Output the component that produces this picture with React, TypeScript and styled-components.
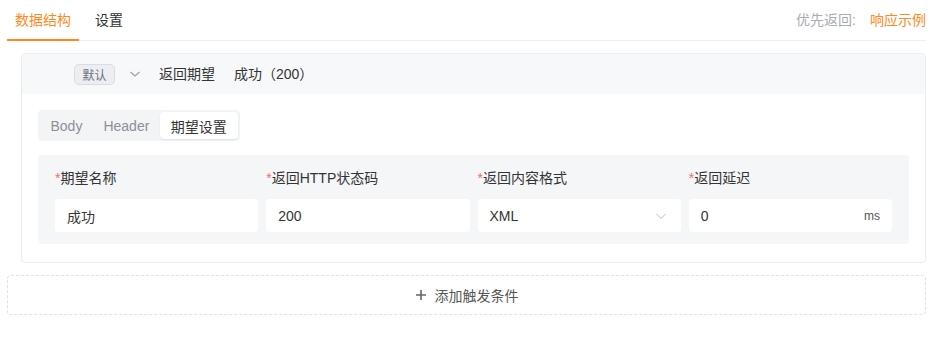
import React from "react";
import styled, { createGlobalStyle } from "styled-components";

const GlobalStyle = createGlobalStyle`
  html, body {
    margin: 0;
    padding: 0;
    background: #ffffff;
  }
  body {
    font-family: "Liberation Sans", "Noto Sans CJK SC", sans-serif;
    color: #333333;
  }
`;

const ORANGE = "#ff8a1c";

const Page = styled.div`
  width: 919px;
  padding-left: 7px;
`;

const TabBar = styled.div`
  display: flex;
  align-items: stretch;
  height: 40px;
  border-bottom: 1px solid #eeeff2;
`;

const Tab = styled.div<{ $active?: boolean }>`
  display: flex;
  align-items: center;
  padding: 0 8px;
  margin-right: 8px;
  font-size: 14px;
  line-height: 20px;
  color: ${(p) => (p.$active ? ORANGE : "#333333")};
  border-bottom: 2px solid ${(p) => (p.$active ? ORANGE : "transparent")};
  margin-bottom: -1px;
`;

const Priority = styled.div`
  margin-left: auto;
  display: flex;
  align-items: center;
  gap: 14px;
  font-size: 14px;
  line-height: 20px;
  color: #a8abb2;
`;

const PriorityLink = styled.span`
  color: ${ORANGE};
`;

const Card = styled.div`
  margin: 12px 0 0 14px;
  border: 1px solid #ebedf0;
  border-radius: 4px;
  overflow: hidden;
`;

const CardHeader = styled.div`
  display: flex;
  align-items: center;
  height: 40px;
  padding-left: 52px;
  background: #f7f8fa;
  font-size: 14px;
  color: #333333;
`;

const Tag = styled.span`
  display: inline-flex;
  align-items: center;
  justify-content: center;
  box-sizing: border-box;
  width: 41px;
  height: 21px;
  border: 1px solid #d9dce2;
  border-radius: 5px;
  background: #eceef2;
  font-size: 12px;
  color: #6b7280;
`;

const Chevron = styled.svg`
  margin: 0 18px 0 14px;
  color: #9a9ea6;
`;

const HeaderText = styled.span<{ $gap?: number }>`
  margin-right: ${(p) => p.$gap ?? 0}px;
  line-height: 20px;
`;

const CardBody = styled.div`
  padding: 16px 16px 18px;
`;

const Segmented = styled.div`
  display: inline-flex;
  padding: 2px;
  background: #f3f4f6;
  border-radius: 4px;
`;

const Segment = styled.div<{ $active?: boolean }>`
  display: flex;
  align-items: center;
  height: 27px;
  padding: 0 ${(p) => (p.$active ? 11 : 10.5)}px;
  font-size: 14px;
  border-radius: 4px;
  color: ${(p) => (p.$active ? "#333333" : "#8c8f96")};
  background: ${(p) => (p.$active ? "#ffffff" : "transparent")};
  box-shadow: ${(p) => (p.$active ? "0 1px 2px rgba(0,0,0,0.08)" : "none")};
`;

const FormPanel = styled.div`
  margin-top: 14px;
  padding: 13px 17px 12px;
  background: #f5f6f8;
  border-radius: 4px;
  display: grid;
  grid-template-columns: repeat(4, 1fr);
  column-gap: 8px;
  row-gap: 11px;
`;

const Label = styled.div`
  font-size: 14px;
  line-height: 20px;
  color: #333333;
`;

const Star = styled.span`
  color: #f56c6c;
`;

const Field = styled.div`
  display: flex;
  align-items: center;
  height: 33px;
  padding: 0 12px;
  background: #ffffff;
  border-radius: 4px;
  font-size: 14px;
  color: #333333;
`;

const Suffix = styled.span`
  margin-left: auto;
  font-size: 12px;
  color: #555555;
`;

const SelectArrow = styled.svg`
  margin-left: auto;
  margin-right: 2px;
  color: #b8bcc4;
`;

const AddButton = styled.div`
  margin-top: 12px;
  height: 38px;
  border: 1px dashed #dfe1e6;
  border-radius: 4px;
  display: flex;
  align-items: center;
  justify-content: center;
  gap: 8px;
  font-size: 14px;
  color: #555555;
`;

const fields = [
  { label: "期望名称", value: "成功" },
  { label: "返回HTTP状态码", value: "200" },
  { label: "返回内容格式", value: "XML", select: true },
  { label: "返回延迟", value: "0", suffix: "ms" },
];

const App = () => {
  return (
    <>
      <GlobalStyle />
      <Page>
        <TabBar>
          <Tab $active>数据结构</Tab>
          <Tab>设置</Tab>
          <Priority>
            <span>优先返回:</span>
            <PriorityLink>响应示例</PriorityLink>
          </Priority>
        </TabBar>

        <Card>
          <CardHeader>
            <Tag>默认</Tag>
            <Chevron width="12" height="12" viewBox="0 0 12 12" fill="none">
              <path d="M1.5 4 L6 8 L10.5 4" stroke="currentColor" strokeWidth="1.1" />
            </Chevron>
            <HeaderText $gap={19}>返回期望</HeaderText>
            <HeaderText>成功（200）</HeaderText>
          </CardHeader>
          <CardBody>
            <Segmented>
              <Segment>Body</Segment>
              <Segment>Header</Segment>
              <Segment $active>期望设置</Segment>
            </Segmented>
            <FormPanel>
              {fields.map((f) => (
                <Label key={f.label}>
                  <Star>*</Star>
                  {f.label}
                </Label>
              ))}
              {fields.map((f) => (
                <Field key={f.label}>
                  {f.value}
                  {f.select && (
                    <SelectArrow width="12" height="12" viewBox="0 0 12 12" fill="none">
                      <path d="M1.5 4 L6 8.5 L10.5 4" stroke="currentColor" strokeWidth="1" />
                    </SelectArrow>
                  )}
                  {f.suffix && <Suffix>{f.suffix}</Suffix>}
                </Field>
              ))}
            </FormPanel>
          </CardBody>
        </Card>

        <AddButton>
          <svg width="12" height="12" viewBox="0 0 12 12">
            <path d="M6 1 V11 M1 6 H11" stroke="#666" strokeWidth="1.6" />
          </svg>
          <span>添加触发条件</span>
        </AddButton>
      </Page>
    </>
  );
};

export default App;
